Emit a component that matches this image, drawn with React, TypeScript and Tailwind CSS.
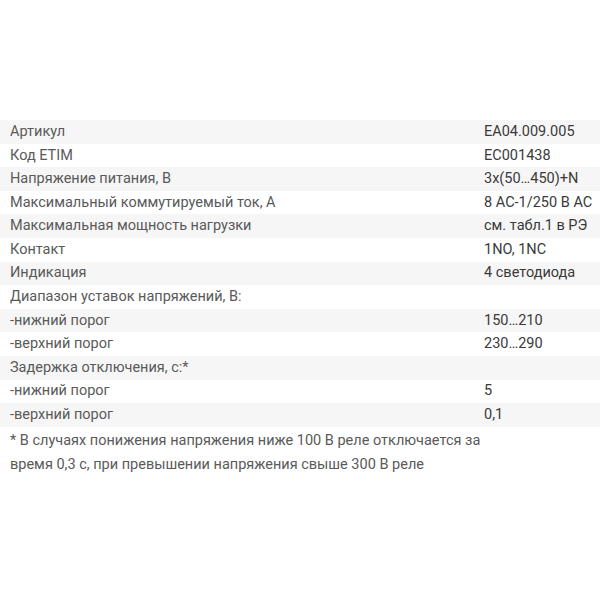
const rows: [string, string][] = [
  ['Артикул', 'EA04.009.005'],
  ['Код ETIM', 'EC001438'],
  ['Напряжение питания, В', '3х(50…450)+N'],
  ['Максимальный коммутируемый ток, А', '8 AC-1/250 В АС'],
  ['Максимальная мощность нагрузки', 'см. табл.1 в РЭ'],
  ['Контакт', '1NO, 1NC'],
  ['Индикация', '4 светодиода'],
  ['Диапазон уставок напряжений, В:', ''],
  ['-нижний порог', '150…210'],
  ['-верхний порог', '230…290'],
  ['Задержка отключения, с:*', ''],
  ['-нижний порог', '5'],
  ['-верхний порог', '0,1'],
]

export default function App() {
  return (
    <div
      className="w-[600px] h-[600px] bg-white pt-[120px] text-[14.5px]"
      style={{ fontFamily: 'Roboto, "Open Sans", sans-serif' }}
    >
      <div className="flex flex-col">
        {rows.map(([label, value], i) => (
          <div
            key={i}
            className={`flex h-[23.6px] items-center ${i % 2 === 0 ? 'bg-[#f6f6f6]' : 'bg-white'}`}
          >
            <span className="w-[474px] pl-[10px] text-[#5a5a5a]">{label}</span>
            <span className="pl-[10px] text-[#3a3a3a]">{value}</span>
          </div>
        ))}
      </div>
      <p className="w-[500px] pl-[10px] pt-[2px] leading-[24px] text-[#5a5a5a]">
        * В случаях понижения напряжения ниже 100 В реле отключается за время 0,3 с, при превышении напряжения свыше 300 В реле
      </p>
    </div>
  )
}
